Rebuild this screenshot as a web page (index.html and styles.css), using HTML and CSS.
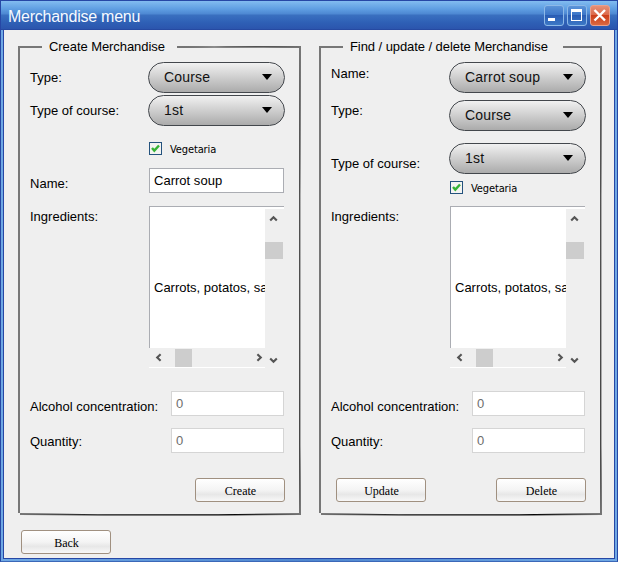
FILE: index.html
```html
<!DOCTYPE html>
<html lang="en">
<head>
<meta charset="utf-8">
<title>Merchandise menu</title>
<link rel="stylesheet" href="styles.css">
</head>
<body>
<svg width="0" height="0" class="defs">
  <defs>
    <linearGradient id="side" x1="0" y1="0" x2="0" y2="1"><stop offset="0" stop-color="#777"/><stop offset=".3" stop-color="#111"/><stop offset=".85" stop-color="#000"/><stop offset="1" stop-color="#777"/></linearGradient>
    <linearGradient id="foot" x1="0" y1="0" x2="1" y2="0"><stop offset="0" stop-color="#777"/><stop offset=".3" stop-color="#111"/><stop offset=".75" stop-color="#000"/><stop offset="1" stop-color="#777"/></linearGradient>
    <symbol id="frame" viewBox="0 0 283 472">
      <path d="M0 1h2v467H0z" fill="#777"/>
      <path d="M281 1h2L282.300 150V400L283 470h-2L281.300 400V150z" fill="url(#side)"/>
      <path d="M2 468L80 469.200H200L283 468v2L200 470.400H80L2 470z" fill="url(#foot)"/>
    </symbol>
    <symbol id="arrow" viewBox="0 0 10 8"><path d="M0 1h10L5 7z"/></symbol>
    <symbol id="check" viewBox="0 0 13 13"><path d="M3 6L5.300 8.600L10 3.500" fill="none" stroke="#36b336" stroke-width="2.400"/></symbol>
    <symbol id="chev" viewBox="0 0 9 7"><path d="M1.200 5.600L4.500 2.200L7.800 5.600" fill="none" stroke="#555" stroke-width="2.100"/></symbol>
  </defs>
</svg>
<div class="window">
  <header class="titlebar">
    <h1>Merchandise menu</h1>
    <div class="controls">
      <span class="ctl"><svg viewBox="0 0 20 20"><path d="M4 13h7v3H4z" fill="#fff"/></svg></span>
      <span class="ctl"><svg viewBox="0 0 20 20"><path d="M4 4h11v12H4zM5 7v8h9V7z" fill="#fff" fill-rule="evenodd"/></svg></span>
      <span class="ctl close"><svg viewBox="0 0 20 20"><path d="M4.500 5l10.500 10.500M15 5L4.500 15.500" stroke="#fff" stroke-width="2.400"/></svg></span>
    </div>
  </header>
  <main>
    <div class="panels">
      <section class="panel create">
        <svg class="frame"><use href="#frame"/></svg>
        <h2><span class="line"></span><span class="caption">Create Merchandise</span><span class="line end"></span></h2>
        <label class="l7">Type:</label><div class="select">Course<svg><use href="#arrow"/></svg></div>
        <label class="l7">Type of course:</label><div class="select">1st<svg><use href="#arrow"/></svg></div>
        <div class="check"><span class="box"><svg><use href="#check"/></svg></span>Vegetaria</div>
        <label class="l7">Name:</label><div class="input name">Carrot soup</div>
        <label class="l2">Ingredients:</label>
        <div class="area">
          <div class="text">Carrots, potatos, salt</div>
          <div class="vbar"><svg class="chev"><use href="#chev"/></svg><i></i><svg class="chev down"><use href="#chev"/></svg></div>
          <div class="hbar"><svg class="chev left"><use href="#chev"/></svg><i></i><svg class="chev right"><use href="#chev"/></svg></div>
        </div>
        <label class="l7">Alcohol concentration:</label><div class="input number">0</div>
        <label class="l5">Quantity:</label><div class="input number">0</div>
        <div class="actions"><button>Create</button></div>
      </section>
      <section class="panel find">
        <svg class="frame"><use href="#frame"/></svg>
        <h2><span class="line"></span><span class="caption">Find / update / delete Merchandise</span><span class="line end"></span></h2>
        <label class="l3">Name:</label><div class="select">Carrot soup<svg><use href="#arrow"/></svg></div>
        <label class="l2">Type:</label><div class="select">Course<svg><use href="#arrow"/></svg></div>
        <label class="l12">Type of course:</label><div class="select">1st<svg><use href="#arrow"/></svg></div>
        <div class="check"><span class="box"><svg><use href="#check"/></svg></span>Vegetaria</div>
        <label class="l2">Ingredients:</label>
        <div class="area">
          <div class="text">Carrots, potatos, salt</div>
          <div class="vbar"><svg class="chev"><use href="#chev"/></svg><i></i><svg class="chev down"><use href="#chev"/></svg></div>
          <div class="hbar"><svg class="chev left"><use href="#chev"/></svg><i></i><svg class="chev right"><use href="#chev"/></svg></div>
        </div>
        <label class="l7">Alcohol concentration:</label><div class="input number">0</div>
        <label class="l5">Quantity:</label><div class="input number">0</div>
        <div class="actions"><button>Update</button><button>Delete</button></div>
      </section>
    </div>
    <button class="back">Back</button>
  </main>
</div>
</body>
</html>
```
FILE: styles.css
```css
* { box-sizing: border-box; }
body { margin: 0; font: 13px/16px "Liberation Sans", sans-serif; color: #000; overflow: hidden; }
svg { display: block; }
.defs { position: absolute; }
.window { width: 618px; height: 562px; border: 1px solid #2647a5; border-bottom-color: #3b68b8; background: linear-gradient(90deg, #6fa8e4, #4f86cf 50%, #6fa8e4); display: flex; flex-direction: column; }
.titlebar { height: 29px; flex: none; display: flex; align-items: flex-start; justify-content: space-between; padding: 4px 7px 0 7px; background: linear-gradient(#82bcf0 0, #5f9ee2 8px, #4d88d2 13px, #3a70c0 14px, #2e5fb5 22px, #2b55ad 28px, #213e96 29px); }
h1 { margin: 3px 0 0; font: 16px/18px "Liberation Sans", sans-serif; letter-spacing: -.25px; color: #f6faff; }
.controls { display: flex; gap: 3px; }
.ctl { width: 20px; height: 21px; border: 1px solid #8db9e8; border-radius: 3px; background: linear-gradient(#5c94d9, #3c76c8 45%, #2a5db4 50%, #3c78c6); }
.ctl svg { width: 20px; height: 20px; margin: -1px; }
.ctl.close { border-color: #eaa08c; background: linear-gradient(#e59078, #dc6a4b 45%, #cc3e1a 50%, #dc6840); }
main { flex: 1; margin: 0 2px 2px; background: #efefef; border: 1px solid #2647a5; border-top: 0; padding: 8px 0 0 14px; }
.panels { display: flex; gap: 18px; }
.panel { position: relative; width: 283px; height: 478px; padding: 0 16px 0 12px; display: grid; grid-template-columns: 118px 137px; align-items: start; }
.create { grid-template-rows: 24px 33px 47px 26px 38px 185px 37px 50px 25px; }
.find { grid-template-rows: 24px 38px 43px 38px 25px 185px 37px 50px 25px; }
.frame { position: absolute; left: 0; top: 7px; width: 283px; height: 472px; pointer-events: none; }
h2 { grid-column: 1 / 3; margin: 0 -16px 0 -12px; font: 13px/16px "Liberation Sans", sans-serif; display: flex; height: 18px; align-items: center; }
.caption { letter-spacing: -.07px; white-space: nowrap; }
.line { width: 24px; height: 2px; background: #777; margin-right: 7px; }
.line.end { flex: none; margin: 0 0 0 auto; width: 124px; background: linear-gradient(2deg, #efefef 0, #777 45%, #111 55%, #777); }
.create .line.end { background: linear-gradient(90deg, #777, #111 40%, #222 70%, #777); clip-path: polygon(0 0, 30% 20%, 70% 10%, 100% 0, 100% 100%, 70% 80%, 30% 80%, 0 100%); }
.find .line.end { width: 39px; background: #777; }
label { white-space: nowrap; letter-spacing: .01px; position: relative; top: 1px; }
.l2 { margin-top: 2px; } .l3 { margin-top: 3px; } .l5 { margin-top: 5px; } .l7 { margin-top: 7px; } .l12 { margin-top: 12px; }
.select { width: 137px; height: 31px; border: 1px solid #43474c; border-radius: 16px; background: linear-gradient(#f1f1f1, #ababab); display: flex; align-items: center; justify-content: space-between; padding: 0 12px 1px 15px; font-size: 14px; letter-spacing: .18px; color: #111; }
.select svg { width: 10px; height: 8px; color: #000; }
.check { grid-column: 2; display: flex; height: 13px; margin-left: 1px; font: 11px/15px "DejaVu Sans Condensed", "DejaVu Sans", sans-serif; letter-spacing: -.12px; }
.box { width: 13px; height: 13px; background: #f4f4f2; border: 1px solid #24527d; margin-right: 8px; }
.box svg { width: 13px; height: 13px; margin: -1px; }
.input { height: 25px; background: #fff; border: 1px solid #abadb3; padding: 4px; letter-spacing: .02px; }
.name { width: 135px; margin-left: 1px; }
.number { width: 113px; justify-self: end; margin-right: 1px; border-color: #d5d5d5; color: #6d6d6d; }
.area { width: 135px; height: 162px; margin-left: 1px; border-top: 1px solid #abadb3; display: grid; grid-template-columns: 116px 18px; grid-template-rows: 141px 20px; background: linear-gradient(#fff 2px, transparent 2px); }
.text { border-left: 1px solid #abadb3; background: #fff; padding: 73px 0 0 4px; overflow: hidden; white-space: nowrap; }
.vbar { grid-row: 1 / 3; grid-column: 2; margin-top: 2px; background: #efefef; display: flex; flex-direction: column; align-items: center; padding: 6px 0 4px; }
.vbar .chev { margin-right: 1px; }
.vbar i { width: 18px; height: 17px; background: #cdcdcd; margin: 20px 0 auto; }
.hbar { display: flex; align-items: center; height: 20px; background: #efefef; border-bottom: 1px solid #fff; padding: 0 1px 0 5px; }
.hbar i { width: 17px; height: 18px; background: #cdcdcd; margin: 0 auto 0 12px; }
.chev { width: 9px; height: 7px; }
.down { transform: rotate(180deg); }
.left { transform: rotate(-90deg); }
.right { transform: rotate(90deg); }
.actions { grid-column: 1 / 3; display: flex; justify-content: flex-end; }
.find .actions { justify-content: space-between; padding-left: 5px; }
button { display: block; width: 90px; height: 24px; border: 1px solid #a09080; border-radius: 3px; background: linear-gradient(#fff, #f4f4f4 50%, #e7e7e7 70%, #f8f8f8); font: 12px/16px "Liberation Serif", serif; padding: 2px 0 0 1px; color: #000; }
.back { margin: 14px 0 0 3px; }
```
